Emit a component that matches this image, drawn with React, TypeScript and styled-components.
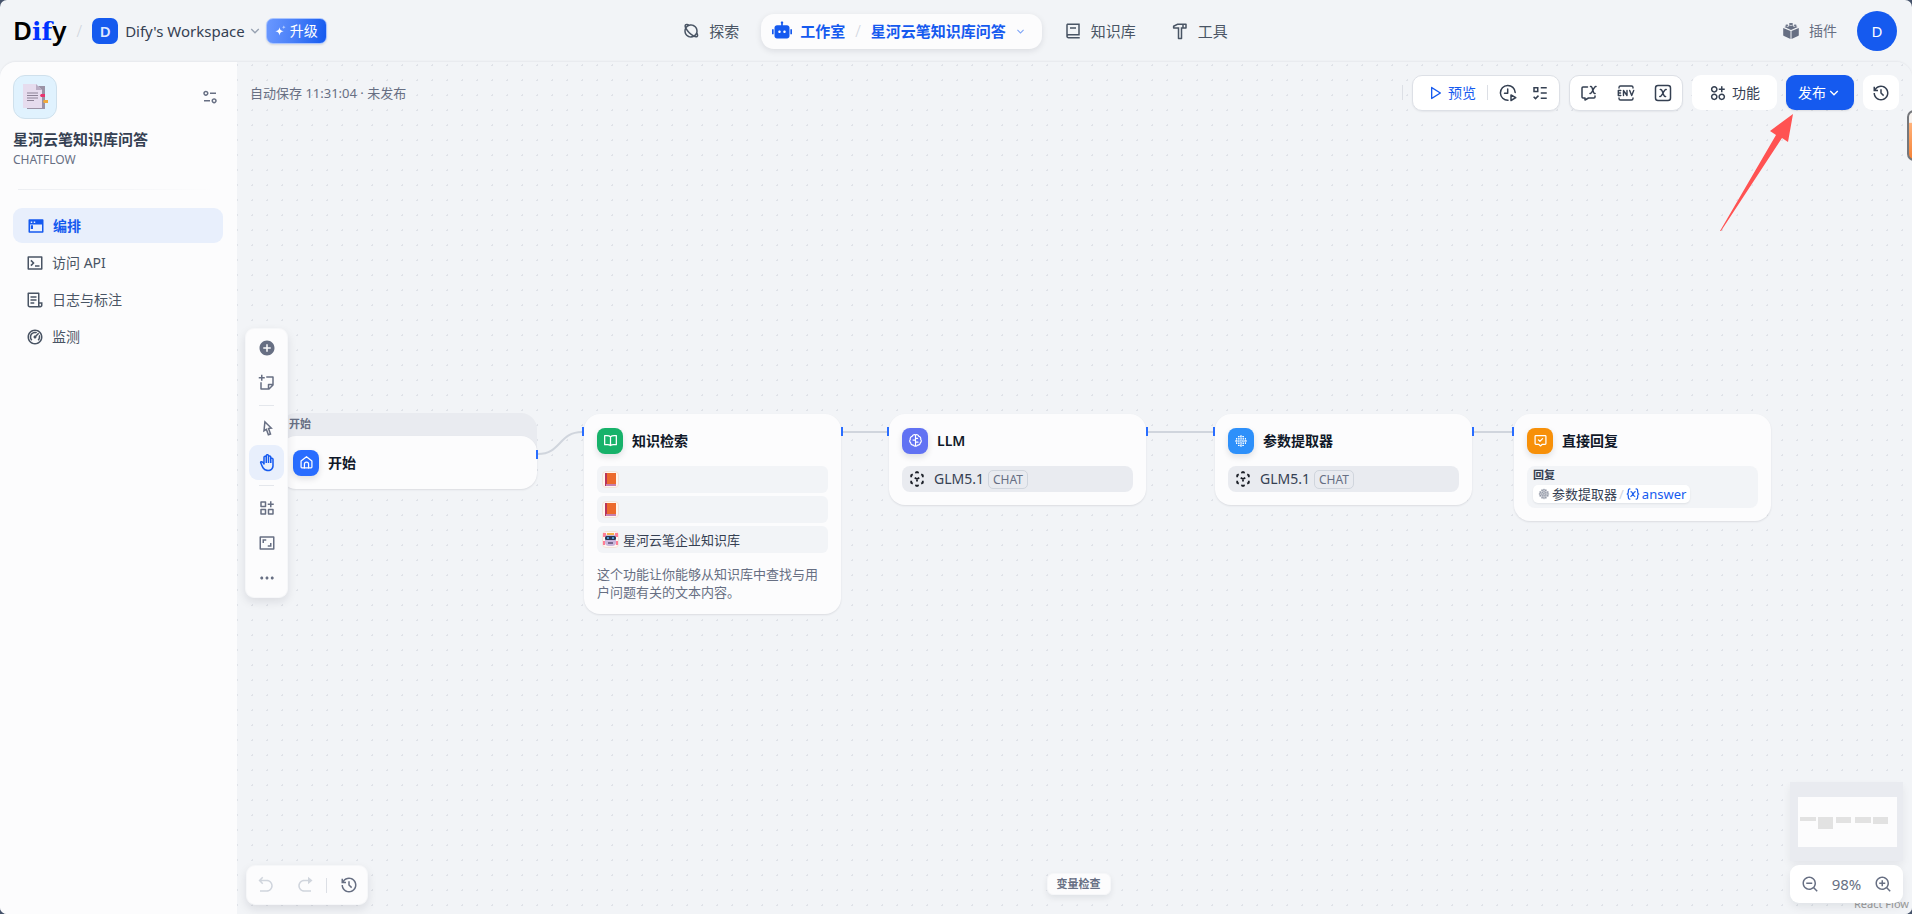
import React from 'react';
import styled, { createGlobalStyle, css } from 'styled-components';
import {
  RiAddCircleFill,
  RiApps2AddLine,
  RiArrowDownSLine,
  RiArrowGoBackLine,
  RiArrowGoForwardFill,
  RiAspectRatioLine,
  RiBook2Line,
  RiCursorLine,
  RiDashboard2Line,
  RiEqualizer2Line,
  RiFileList3Line,
  RiFunctionAddLine,
  RiHammerLine,
  RiHand,
  RiHistoryLine,
  RiListCheck3,
  RiMoreFill,
  RiPlanetLine,
  RiPlayLargeLine,
  RiRobot2Fill,
  RiStickyNoteAddLine,
  RiTerminalBoxLine,
  RiTerminalWindowFill,
  RiZoomInLine,
  RiZoomOutLine,
} from 'react-icons/ri';

const c = {
  page: '#f2f4f7',
  panel: '#fcfcfd',
  white: '#ffffff',
  ink: '#101828',
  strong: '#354052',
  text: '#495464',
  muted: '#676f83',
  faint: '#d0d5dd',
  line: '#e4e7ec',
  block: '#e9ebf0',
  blue: '#155aef',
  brightBlue: '#296dff',
};

const GlobalStyle = createGlobalStyle`
  *, *::before, *::after { box-sizing: border-box; }
  body {
    margin: 0;
    background: #46536b;
    color: ${c.text};
    font-family: "Noto Sans", "Noto Sans CJK SC", sans-serif;
    font-size: 14px;
    line-height: 20px;
  }
  button, a { font: inherit; color: inherit; text-decoration: none; }
  button { margin: 0; padding: 0; border: 0; background: none; cursor: pointer; }
  svg { display: block; flex: none; }
`;

/* ---------- page frame ---------- */

const Page = styled.div`
  display: flex;
  flex-direction: column;
  min-height: 100vh;
  border-radius: 7px;
  background: ${c.page};
  overflow: hidden;
`;

const Header = styled.header`
  display: grid;
  grid-template-columns: 1fr auto 1fr;
  align-items: center;
  height: 62px;
  padding: 0 15px 0 13px;
`;

const HeaderSide = styled.div<{ $end?: boolean }>`
  display: flex;
  align-items: center;
  justify-content: ${p => (p.$end ? 'flex-end' : 'flex-start')};
`;

const Wordmark = styled.a`
  display: flex;
  align-items: baseline;
  color: #000000;
  font-size: 26px;
  font-weight: 600;
  line-height: 34px;

  em {
    color: #0033ff;
    font-family: "DejaVu Serif", serif;
    font-size: 25px;
    font-style: normal;
    font-weight: 700;
  }
`;

const Slash = styled.span<{ $gap: number }>`
  margin: 0 ${p => p.$gap}px;
  color: ${c.faint};
  font-size: 16px;
  font-weight: 300;
`;

const WorkspaceButton = styled.button`
  display: flex;
  align-items: center;
  gap: 2px;
  color: ${c.strong};
  font-size: 15px;
  white-space: nowrap;
`;

const WorkspaceBadge = styled.span`
  display: grid;
  place-items: center;
  width: 26px;
  height: 26px;
  margin-right: 5px;
  border-radius: 7px;
  background: ${c.blue};
  color: #dfe9ff;
  font-weight: 600;
`;

const UpgradeButton = styled.button`
  display: flex;
  align-items: center;
  gap: 4px;
  height: 26px;
  margin-left: 3px;
  padding: 0 8px;
  border: 1px solid #a9c4ff;
  border-radius: 7px;
  background: linear-gradient(98deg, #6a98ff 0%, #4a80f8 45%, ${c.blue} 100%);
  box-shadow: 0 1px 2px rgba(16, 24, 40, 0.12);
  color: ${c.white};
`;

const Nav = styled.nav`
  display: flex;
  align-items: center;
  gap: 9px;
`;

const NavLink = styled.a`
  display: flex;
  align-items: center;
  gap: 9px;
  height: 35px;
  padding: 0 13px;
  color: ${c.text};
  font-size: 15px;
`;

const ActiveNav = styled.div`
  display: flex;
  align-items: center;
  height: 35px;
  padding: 0 15px 0 11px;
  border-radius: 13px;
  background: ${c.panel};
  box-shadow: 0 2px 6px rgba(16, 24, 40, 0.1);
  color: ${c.blue};
  font-size: 15px;
  font-weight: 600;

  a, button {
    display: flex;
    align-items: center;
    gap: 8px;
  }
`;

const PluginLink = styled.a`
  display: flex;
  align-items: center;
  gap: 9px;
  margin-right: 20px;
  color: ${c.muted};
`;

const Avatar = styled.button`
  width: 40px;
  height: 40px;
  border-radius: 50%;
  background: ${c.blue};
  color: ${c.white};
  font-size: 15px;
`;

const Body = styled.div`
  display: flex;
  flex: 1;
  border-radius: 16px 16px 0 0;
  box-shadow: 0 -1px 2px rgba(16, 24, 40, 0.05);
  overflow: hidden;
`;

/* ---------- sidebar ---------- */

const Sidebar = styled.aside`
  flex: none;
  width: 237px;
  padding: 13px 14px 13px 13px;
  background: ${c.panel};
`;

const AppHead = styled.div`
  display: flex;
  align-items: center;
  justify-content: space-between;
  padding-right: 4px;
`;

const AppIcon = styled.span`
  display: grid;
  place-items: center;
  width: 44px;
  height: 44px;
  border: 1px solid #cfe0ec;
  border-radius: 12px;
  background: #e0f2fe;
`;

const IconButton = styled.button`
  color: ${c.muted};
`;

const AppName = styled.h1`
  margin: 9px 0 0;
  color: ${c.strong};
  font-size: 15px;
  font-weight: 600;
  line-height: 22px;
`;

const AppKind = styled.p`
  margin: 1px 0 0;
  color: ${c.muted};
  font-size: 12px;
  line-height: 18px;
`;

const SideDivider = styled.hr`
  height: 1px;
  margin: 20px 9px 18px 5px;
  border: 0;
  background: linear-gradient(90deg, #eceef2, ${c.panel});
`;

const Menu = styled.nav`
  display: flex;
  flex-direction: column;
  gap: 2px;
`;

const MenuLink = styled.a<{ $active?: boolean }>`
  display: flex;
  align-items: center;
  gap: 8px;
  height: 35px;
  padding-left: 13px;
  border-radius: 9px;
  ${p =>
    p.$active &&
    css`
      padding-left: 14px;
      background: #e8effc;
      color: ${c.blue};
      font-weight: 600;
    `}
`;

/* ---------- canvas and its floating bars ---------- */

const Canvas = styled.main`
  position: relative;
  flex: 1;
  min-width: 0;
  background-color: ${c.page};
  background-image: radial-gradient(circle, #dfe2e8 1px, transparent 1px);
  background-size: 15px 15px;
  background-position: 8px 11px;
  overflow: hidden;
`;

const TopBar = styled.div`
  position: absolute;
  z-index: 3;
  inset: 0 0 auto 0;
  display: flex;
  align-items: center;
  justify-content: space-between;
  height: 61px;
  padding: 0 13px;
`;

const SaveStatus = styled.span`
  color: ${c.muted};
  font-size: 13px;
`;

const Actions = styled.div`
  display: flex;
  align-items: center;
  gap: 9px;
`;

const VLine = styled.span`
  width: 1px;
  height: 15px;
  background: #dcdfe5;
`;

const Group = styled.div<{ $gap: number; $pad: string }>`
  display: flex;
  align-items: center;
  gap: ${p => p.$gap}px;
  height: 36px;
  padding: ${p => p.$pad};
  border: 1px solid #dde0e6;
  border-radius: 10px;
  background: ${c.white};
  box-shadow: 0 1px 2px rgba(16, 24, 40, 0.06);
  color: ${c.strong};
`;

const BarButton = styled.button<{ $kind?: 'primary' | 'link' | 'plain'; $pad?: number }>`
  display: flex;
  align-items: center;
  gap: 5px;
  height: 35px;
  padding: 0 ${p => p.$pad ?? 0}px;
  border-radius: 9px;
  white-space: nowrap;
  ${p =>
    p.$kind === 'primary' &&
    css`
      gap: 0;
      background: ${c.blue};
      color: ${c.white};
      box-shadow: 0 1px 2px rgba(16, 24, 40, 0.1);
    `}
  ${p => p.$kind === 'link' && css`color: ${c.blue};`}
  ${p =>
    p.$kind === 'plain' &&
    css`
      background: ${c.white};
      color: ${c.strong};
    `}
`;

const floating = css`
  position: absolute;
  z-index: 2;
  border: 1px solid #f6f7f9;
  border-radius: 9px;
  background: ${c.panel};
  box-shadow: 0 4px 10px rgba(16, 24, 40, 0.1);
  color: ${c.muted};
`;

const ToolRail = styled.div`
  ${floating}
  top: 50%;
  left: 8px;
  margin-top: -160px;
  display: flex;
  flex-direction: column;
  align-items: center;
  padding: 1px 3px 2px;
`;

const ToolButton = styled.button<{ $active?: boolean }>`
  display: grid;
  place-items: center;
  width: 35px;
  height: 35px;
  border-radius: 9px;
  ${p =>
    p.$active &&
    css`
      background: #e8effc;
      color: ${c.blue};
    `}
  &:disabled { color: ${c.faint}; }
`;

const HLine = styled.span`
  width: 15px;
  height: 1px;
  margin: 5px 0 4px;
  background: ${c.line};
`;

const UndoBar = styled.div`
  ${floating}
  bottom: 9px;
  left: 9px;
  display: flex;
  align-items: center;
  gap: 4px;
  height: 40px;
  padding: 0 1px;
`;

const VariableButton = styled.button`
  ${floating}
  bottom: 19px;
  left: 50%;
  margin-left: -28px;
  height: 22px;
  padding: 0 9px;
  border-radius: 6px;
  box-shadow: 0 3px 6px rgba(16, 24, 40, 0.08);
  color: ${c.muted};
  font-size: 11px;
  font-weight: 600;
  line-height: 20px;
`;

const CornerStack = styled.div`
  position: absolute;
  z-index: 2;
  right: 9px;
  bottom: 11px;
  display: flex;
  flex-direction: column;
  gap: 4px;
  width: 113px;
`;

const MiniMap = styled.div`
  height: 79px;
  padding: 15px 6px 14px 8px;
  background: ${c.block};
  box-shadow: 0 4px 8px rgba(16, 24, 40, 0.06);
`;

const ZoomBar = styled.div`
  display: flex;
  align-items: center;
  justify-content: space-between;
  height: 38px;
  padding: 0 11px;
  border-radius: 9px;
  background: ${c.white};
  box-shadow: 0 4px 8px rgba(16, 24, 40, 0.08);
  color: ${c.muted};
  font-size: 15px;
`;

const Attribution = styled.a`
  position: absolute;
  right: 3px;
  bottom: 2px;
  color: #999999;
  font-size: 11px;
  line-height: 16px;
`;

const Wires = styled.svg`
  position: absolute;
  inset: 0;
  width: 100%;
  height: 100%;
`;

const Pointer = styled.svg`
  position: absolute;
  z-index: 4;
  top: 51px;
  right: 118px;
`;

const SideWidget = styled.button`
  position: absolute;
  z-index: 4;
  top: 48px;
  right: -40px;
  width: 45px;
  height: 51px;
  border: 2px solid #75777c;
  border-radius: 7px;
  background: linear-gradient(180deg, #f7f3f0 0 22%, #ffb27a 24%, #f58236 100%);
`;

/* ---------- nodes ---------- */

const Node = styled.article<{ $x: number; $y: number }>`
  position: absolute;
  left: ${p => p.$x}px;
  top: ${p => p.$y}px;
  width: 257px;
  padding: 13px;
  border-radius: 16px;
  background: ${c.panel};
  box-shadow: 0 1px 2px rgba(16, 24, 40, 0.1);
`;

const StartShell = styled.section`
  position: absolute;
  left: 43px;
  top: 351px;
  width: 257px;
  padding-top: 23px;
  border-radius: 16px;
  background: ${c.block};

  ${Node} { position: relative; }
`;

const StartLabel = styled.span`
  position: absolute;
  top: 2px;
  left: 9px;
  color: ${c.muted};
  font-size: 11px;
  font-weight: 600;
  line-height: 18px;
`;

const Port = styled.span<{ $x: number; $y: number }>`
  position: absolute;
  z-index: 1;
  left: ${p => p.$x}px;
  top: ${p => p.$y}px;
  width: 2px;
  height: 9px;
  background: ${c.brightBlue};
`;

const NodeHead = styled.header`
  display: flex;
  align-items: center;
  gap: 9px;
  height: 27px;
`;

const NodeIcon = styled.span<{ $color: string }>`
  display: grid;
  place-items: center;
  width: 26px;
  height: 26px;
  border-radius: 8px;
  background: ${p => p.$color};
  box-shadow: 0 3px 6px rgba(16, 24, 40, 0.12);
  color: ${c.white};
`;

const NodeTitle = styled.h2`
  margin: 0;
  color: ${c.ink};
  font-size: 14px;
  font-weight: 600;
`;

const Rows = styled.ul`
  display: flex;
  flex-direction: column;
  gap: 3px;
  margin: 12px 0 0;
  padding: 0;
  list-style: none;
`;

const Row = styled.li`
  display: flex;
  align-items: center;
  gap: 4px;
  height: 27px;
  padding: 0 5px;
  border-radius: 6px;
  background: ${c.page};
  color: ${c.strong};
  font-size: 13px;
`;

const SourceIcon = styled.span`
  display: grid;
  place-items: center;
  width: 17px;
  height: 17px;
  border: 1px solid #f2e3da;
  border-radius: 4px;
  background: #fff6ef;
`;

const Description = styled.p`
  margin: 12px 0 0;
  color: ${c.muted};
  font-size: 13px;
  line-height: 18px;
`;

const Model = styled.div`
  display: flex;
  align-items: center;
  height: 26px;
  margin-top: 12px;
  padding-left: 7px;
  border-radius: 8px;
  background: ${c.block};
  color: ${c.strong};
`;

const ModelName = styled.span`
  margin: 0 4px 0 9px;
`;

const Badge = styled.span`
  padding: 0 4px;
  border: 1px solid ${c.faint};
  border-radius: 5px;
  color: ${c.muted};
  font-size: 12px;
  line-height: 17px;
`;

const Answer = styled.div`
  display: flex;
  flex-direction: column;
  align-items: flex-start;
  gap: 2px;
  height: 42px;
  margin-top: 12px;
  padding: 1px 6px;
  border-radius: 8px;
  background: ${c.page};
`;

const AnswerLabel = styled.span`
  color: ${c.strong};
  font-size: 11px;
  font-weight: 600;
  line-height: 16px;
`;

const Tag = styled.span`
  display: flex;
  align-items: center;
  gap: 2px;
  height: 18px;
  padding: 0 4px 0 5px;
  border-radius: 5px;
  background: ${c.white};
  box-shadow: 0 1px 2px rgba(16, 24, 40, 0.08);
  color: ${c.strong};
  font-size: 13px;
  line-height: 18px;
  white-space: nowrap;

  i { color: ${c.faint}; font-style: normal; }
  b { color: ${c.blue}; font-weight: 400; }
  svg:first-of-type { color: ${c.muted}; }
  svg:last-of-type { color: ${c.blue}; }
`;

/* ---------- drawings ---------- */

type StrokeProps = { size?: number; width?: number; children: React.ReactNode };

const Stroke = ({ size = 18, width = 1.5, children }: StrokeProps) => (
  <svg width={size} height={size} viewBox="0 0 18 18" fill="none" stroke="currentColor" strokeWidth={width} strokeLinecap="round" strokeLinejoin="round" aria-hidden>
    {children}
  </svg>
);

const Sparkle = () => (
  <svg width="11" height="12" viewBox="0 0 11 12" fill="#fff" aria-hidden>
    <path d="M4.5 2.2c.5 2.7 1.3 3.5 4.2 4.1-2.9.6-3.7 1.4-4.2 4.2C4 7.7 3.2 6.9.3 6.3 3.2 5.7 4 4.9 4.5 2.2Z" />
    <path d="M8.8.3c.2 1.2.6 1.6 1.9 1.9-1.3.3-1.7.7-1.9 1.9-.2-1.2-.6-1.6-1.9-1.9C8.2 1.9 8.6 1.5 8.8.3Z" opacity=".6" />
  </svg>
);

const PluginIcon = () => (
  <svg width="18" height="18" viewBox="0 0 18 18" fill="currentColor" aria-hidden>
    <path d="M1.2 5.9 8.5 9v8L2 14.1a1.3 1.3 0 0 1-.8-1.2Z" />
    <path d="M16.8 5.9 9.5 9v8l6.5-2.9a1.3 1.3 0 0 0 .8-1.2Z" />
    <path d="m2.4 5 2-.9c.6.7 2 .7 2.6.2V3.2c.9.6 3.1.6 4 0v1.1c.6.5 2 .5 2.6-.2l2 .9L9 7.9Z" />
    <ellipse cx="9" cy="1.9" rx="2.1" ry="1" />
    <ellipse cx="4.9" cy="3.3" rx="1.5" ry=".8" />
    <ellipse cx="13.1" cy="3.3" rx="1.5" ry=".8" />
  </svg>
);

const DocumentPicture = () => (
  <svg width="26" height="28" viewBox="0 0 26 28" aria-hidden>
    <path d="M5 3h18v23H5Z" fill="#9b92a5" />
    <path d="M1 1h13l6 6v18H1Z" fill="#e6dcee" />
    <path d="m14 1 6 6h-6Z" fill="#b9adc4" />
    <path d="M5 10h11M5 12.5h11M5 15h11M5 17.5h7" stroke="#8c8296" />
    <path d="M19 11h4v3h-4l-1-1.5Z" fill="#e8356f" />
    <path d="M22 17h4v3h-4l-1-1.5Z" fill="#f0a93a" />
  </svg>
);

const BookPicture = () => (
  <svg width="11" height="13" viewBox="0 0 11 13" aria-hidden>
    <path d="M0 0h11v13H0Z" fill="#e0662b" />
    <path d="M2 0h9v11H2Z" fill="#ec6a2c" />
    <path d="M0 0h2v13H0Z" fill="#b8345a" />
    <path d="M1 11h10v2H1Z" fill="#c77fb0" />
  </svg>
);

const RobotPicture = () => (
  <svg width="15" height="15" viewBox="0 0 15 15" aria-hidden>
    <path d="M0 1h3v4H0ZM12 1h3v4h-3ZM0 9h2v4H0ZM13 9h2v4h-2Z" fill="#ff7d95" />
    <rect x="2" y="2" width="11" height="12" rx="4" fill="#c9b6dc" />
    <path d="M4 1h7v2H4Z" fill="#f5b04a" />
    <rect x="2" y="4" width="11" height="4" rx="1.5" fill="#2b3553" />
    <path d="M4 6h2M9 6h2" stroke="#58b8f5" strokeWidth="1.5" />
    <path d="M5 11h5" stroke="#4b3c60" strokeWidth="1.3" />
  </svg>
);

const ModelIcon = () => (
  <svg width="16" height="16" viewBox="0 0 16 16" fill="none" stroke="#1b1f27" strokeWidth="1.8" aria-hidden>
    <path d="m6.3 1.9 1.7-.9 1.7.9M2.2 6.3V4.3l1.6-.9M12.2 3.4l1.6.9v2M2.2 9.7v2l1.6.9M13.8 9.7v2l-1.6.9M6.3 14.1l1.7.9 1.7-.9M5.7 6.7 8 8l2.3-1.3M8 8v2.6" />
  </svg>
);

const DotsIcon = ({ size = 14 }: { size?: number }) => (
  <svg width={size} height={size} viewBox="0 0 14 14" fill="none" stroke="currentColor" strokeWidth="1" aria-hidden>
    <path d="M2.5 4v6M4.8 2v10M7 1v12M9.2 2v10M11.500 4v6M4 2.500h6M2 4.800h10M1 7h12M2 9.200h10M4 11.500h6" strokeDasharray="1.400 .8" />
  </svg>
);

const HomeGlyph = () => (
  <Stroke size={15}>
    <path d="M2.5 7.2 9 2l6.5 5.2v7.3a1 1 0 0 1-1 1h-11a1 1 0 0 1-1-1Z" />
    <path d="M6.5 15.5V11a2.5 2.5 0 0 1 5 0v4.5" />
  </Stroke>
);

const BookGlyph = () => (
  <Stroke size={15}>
    <path d="M9 4.5C8 3.5 6.5 3 4.5 3H2v11h3.5c1.5 0 2.7.4 3.5 1 .8-.6 2-1 3.5-1H16V3h-2.5C11.5 3 10 3.5 9 4.5ZM9 4.5V15" />
  </Stroke>
);

const BrainGlyph = () => (
  <Stroke size={15} width={1.4}>
    <path d="M9 2.2C6.8 1.5 5.3 2.5 5 4 3.2 4.3 2.2 6 2.8 7.6 1.6 8.8 1.9 10.8 3.2 11.7 3.2 13.6 4.8 14.7 6.3 14.5 7 15.8 8.2 16 9 15.7M9 2.2c2.2-.7 3.7.3 4 1.8 1.8.3 2.8 2 2.2 3.6 1.2 1.2.9 3.2-.4 4.1 0 1.9-1.6 3-3.1 2.8-.7 1.3-1.9 1.5-2.7 1.2M9 2.2v13.5M6 8.5h3M9 6.5h2.5M9 11h3" />
  </Stroke>
);

const ReplyGlyph = () => (
  <Stroke size={15}>
    <path d="M3.5 3h11a1 1 0 0 1 1 1v8.5a1 1 0 0 1-1 1h-3.3L9 15.5l-2.2-2H3.5a1 1 0 0 1-1-1V4a1 1 0 0 1 1-1Z" />
    <path d="m6.5 8.2 1.8 1.8 3.2-3.3" />
  </Stroke>
);

const RunHistoryIcon = () => (
  <Stroke>
    <path d="M9 16.2A7.4 7.4 0 1 1 16.2 8.500" />
    <path d="M8.7 5v4.2H5.500" />
    <path d="m12 11 4.8 2.7L12 16.5Z" />
  </Stroke>
);

const BubbleXIcon = () => (
  <Stroke>
    <path d="M7.500 3H3a1 1 0 0 0-1 1v9a1 1 0 0 0 1 1h2v2l3.5-2H14a1 1 0 0 0 1-1v-1" />
    <path d="M10.5 2.5h.5c1.800 0 1.800 7 3.600 7h.5M16 2.500h-.3c-1.800 0-3.600 7-5.400 7H10" />
  </Stroke>
);

const EnvIcon = () => (
  <Stroke width={1.4}>
    <path d="M2 4V3.5A1.5 1.5 0 0 1 3.5 2h11A1.5 1.5 0 0 1 16 3.5V4M2 14v.5A1.5 1.5 0 0 0 3.5 16h11a1.5 1.5 0 0 0 1.5-1.5V14" />
    <path d="M3.8 6.5H1.3v5h2.5M1.3 9h2.2M6.5 11.5v-5l3.5 5v-5M12.7 6.5l2 5 2-5" />
  </Stroke>
);

const BoxXIcon = () => (
  <Stroke>
    <rect x="1.5" y="1.5" width="15" height="15" rx="2.5" />
    <path d="M6.3 5.5h.5c2 0 2.3 7 4.3 7h.5M12.2 5.5h-.4c-1.8 0-3.8 7-5.6 7h-.4" />
  </Stroke>
);

const VariableGlyph = () => (
  <Stroke size={14} width={1.6}>
    <path d="M5 2.5c-2 0-2 .8-2 3C3 8 2.5 9 1.5 9c1 0 1.5 1 1.5 3.5 0 2.2 0 3 2 3M13 2.5c2 0 2 .8 2 3C15 8 15.5 9 16.5 9c-1 0-1.5 1-1.5 3.5 0 2.2 0 3-2 3" />
    <path d="M6.5 6c2.3 0 2.3 6 4.8 6M11.8 6c-2 0-3.3 6-5.6 6" />
  </Stroke>
);

/* ---------- data ---------- */

const menu = [
  { label: '编排', Icon: RiTerminalWindowFill, active: true },
  { label: '访问 API', Icon: RiTerminalBoxLine },
  { label: '日志与标注', Icon: RiFileList3Line },
  { label: '监测', Icon: RiDashboard2Line },
];

const ports = [
  [299, 388],
  [345, 365],
  [604, 365],
  [650, 365],
  [909, 365],
  [976, 365],
  [1235, 365],
  [1275, 365],
];

const miniNodes = [
  [2, 20, 16, 4],
  [20, 20, 15, 12],
  [38, 20, 15, 6],
  [57, 20, 16, 6],
  [75, 20, 15, 7],
];

const ModelRow = () => (
  <Model>
    <ModelIcon />
    <ModelName>GLM5.1</ModelName>
    <Badge>CHAT</Badge>
  </Model>
);

export default function App() {
  return (
    <>
      <GlobalStyle />
      <Page>
        <Header>
          <HeaderSide>
            <Wordmark href="#" aria-label="Dify">D<em>if</em>y</Wordmark>
            <Slash $gap={10}>/</Slash>
            <WorkspaceButton>
              <WorkspaceBadge>D</WorkspaceBadge>
              Dify's Workspace
              <RiArrowDownSLine size={16} color="#98a2b2" />
            </WorkspaceButton>
            <UpgradeButton><Sparkle />升级</UpgradeButton>
          </HeaderSide>
          <Nav aria-label="主导航">
            <NavLink href="#"><RiPlanetLine size={18} />探索</NavLink>
            <ActiveNav>
              <a href="#"><RiRobot2Fill size={20} />工作室</a>
              <Slash $gap={10}>/</Slash>
              <button>星河云笔知识库问答<RiArrowDownSLine size={13} color="#7ba3f7" /></button>
            </ActiveNav>
            <NavLink href="#"><RiBook2Line size={18} />知识库</NavLink>
            <NavLink href="#"><RiHammerLine size={18} />工具</NavLink>
          </Nav>
          <HeaderSide $end>
            <PluginLink href="#"><PluginIcon />插件</PluginLink>
            <Avatar aria-label="账户">D</Avatar>
          </HeaderSide>
        </Header>

        <Body>
          <Sidebar>
            <AppHead>
              <AppIcon><DocumentPicture /></AppIcon>
              <IconButton aria-label="设置"><RiEqualizer2Line size={18} /></IconButton>
            </AppHead>
            <AppName>星河云笔知识库问答</AppName>
            <AppKind>CHATFLOW</AppKind>
            <SideDivider />
            <Menu aria-label="应用">
              {menu.map(({ label, Icon, active }) => (
                <MenuLink key={label} href="#" $active={active}>
                  <Icon size={18} />
                  {label}
                </MenuLink>
              ))}
            </Menu>
          </Sidebar>

          <Canvas>
            <TopBar>
              <SaveStatus>自动保存 11:31:04 · 未发布</SaveStatus>
              <Actions>
                <VLine />
                <Group $gap={11} $pad="0 7px 0 14px">
                  <BarButton $kind="link"><RiPlayLargeLine size={16} />预览</BarButton>
                  <VLine />
                  <BarButton aria-label="运行历史"><RunHistoryIcon /></BarButton>
                  <BarButton aria-label="检查清单" $pad={3}><RiListCheck3 size={18} /></BarButton>
                </Group>
                <Group $gap={19} $pad="0 10px">
                  <BarButton aria-label="会话变量"><BubbleXIcon /></BarButton>
                  <BarButton aria-label="环境变量"><EnvIcon /></BarButton>
                  <BarButton aria-label="系统变量"><BoxXIcon /></BarButton>
                </Group>
                <BarButton $kind="plain" $pad={17}><RiApps2AddLine size={18} />功能</BarButton>
                <BarButton $kind="primary" $pad={12}>发布<RiArrowDownSLine size={16} /></BarButton>
                <BarButton $kind="plain" $pad={9} aria-label="版本历史"><RiHistoryLine size={18} /></BarButton>
              </Actions>
            </TopBar>

            <Wires aria-hidden>
              <path
                d="M301 392C324 392 322 370 345 370M606 370H650M911 370H976M1237 370H1275"
                fill="none"
                stroke={c.faint}
                strokeWidth="2"
              />
            </Wires>

            <StartShell>
              <StartLabel>开始</StartLabel>
              <Node $x={0} $y={0}>
                <NodeHead>
                  <NodeIcon $color={c.brightBlue}><HomeGlyph /></NodeIcon>
                  <NodeTitle>开始</NodeTitle>
                </NodeHead>
              </Node>
            </StartShell>

            <Node $x={347} $y={352}>
              <NodeHead>
                <NodeIcon $color="#17b26a"><BookGlyph /></NodeIcon>
                <NodeTitle>知识检索</NodeTitle>
              </NodeHead>
              <Rows>
                <Row><SourceIcon><BookPicture /></SourceIcon></Row>
                <Row><SourceIcon><BookPicture /></SourceIcon></Row>
                <Row><SourceIcon><RobotPicture /></SourceIcon>星河云笔企业知识库</Row>
              </Rows>
              <Description>这个功能让你能够从知识库中查找与用户问题有关的文本内容。</Description>
            </Node>

            <Node $x={652} $y={352}>
              <NodeHead>
                <NodeIcon $color="#6172f3"><BrainGlyph /></NodeIcon>
                <NodeTitle>LLM</NodeTitle>
              </NodeHead>
              <ModelRow />
            </Node>

            <Node $x={978} $y={352}>
              <NodeHead>
                <NodeIcon $color="#2e90fa"><DotsIcon /></NodeIcon>
                <NodeTitle>参数提取器</NodeTitle>
              </NodeHead>
              <ModelRow />
            </Node>

            <Node $x={1277} $y={352}>
              <NodeHead>
                <NodeIcon $color="#f79009"><ReplyGlyph /></NodeIcon>
                <NodeTitle>直接回复</NodeTitle>
              </NodeHead>
              <Answer>
                <AnswerLabel>回复</AnswerLabel>
                <Tag>
                  <DotsIcon size={12} />
                  <span>参数提取器</span>
                  <i>/</i>
                  <VariableGlyph />
                  <b>answer</b>
                </Tag>
              </Answer>
            </Node>

            {ports.map(([x, y]) => <Port key={x} $x={x} $y={y} />)}

            <ToolRail role="toolbar" aria-label="画布工具">
              <ToolButton aria-label="添加节点"><RiAddCircleFill size={18} /></ToolButton>
              <ToolButton aria-label="添加注释"><RiStickyNoteAddLine size={18} /></ToolButton>
              <HLine />
              <ToolButton aria-label="指针模式"><RiCursorLine size={18} /></ToolButton>
              <ToolButton aria-label="手模式" $active><RiHand size={18} /></ToolButton>
              <HLine />
              <ToolButton aria-label="整理节点"><RiFunctionAddLine size={18} /></ToolButton>
              <ToolButton aria-label="最大化画布"><RiAspectRatioLine size={18} /></ToolButton>
              <ToolButton aria-label="更多"><RiMoreFill size={18} /></ToolButton>
            </ToolRail>

            <UndoBar role="toolbar" aria-label="历史">
              <ToolButton disabled aria-label="撤销"><RiArrowGoBackLine size={18} /></ToolButton>
              <ToolButton disabled aria-label="重做"><RiArrowGoForwardFill size={18} /></ToolButton>
              <VLine />
              <ToolButton aria-label="变更历史"><RiHistoryLine size={18} /></ToolButton>
            </UndoBar>

            <VariableButton>变量检查</VariableButton>

            <Attribution href="#">React Flow</Attribution>
            <CornerStack>
              <MiniMap>
                <svg width="99" height="50" viewBox="0 0 99 50" role="img" aria-label="缩略图">
                  <rect width="99" height="50" fill={c.panel} />
                  {miniNodes.map(([x, y, w, h]) => (
                    <rect key={x} x={x} y={y} width={w} height={h} fill="#e2e2e2" />
                  ))}
                </svg>
              </MiniMap>
              <ZoomBar>
                <RiZoomOutLine size={18} />
                <span>98%</span>
                <RiZoomInLine size={18} />
              </ZoomBar>
            </CornerStack>

            <Pointer width="75" height="120" viewBox="0 0 75 120" aria-hidden>
              <path d="M1 118 57 22 51 18 74 1 69 29 63 25 2 118Z" fill="#ff5252" />
            </Pointer>
            <SideWidget aria-label="展开助手" />
          </Canvas>
        </Body>
      </Page>
    </>
  );
}
